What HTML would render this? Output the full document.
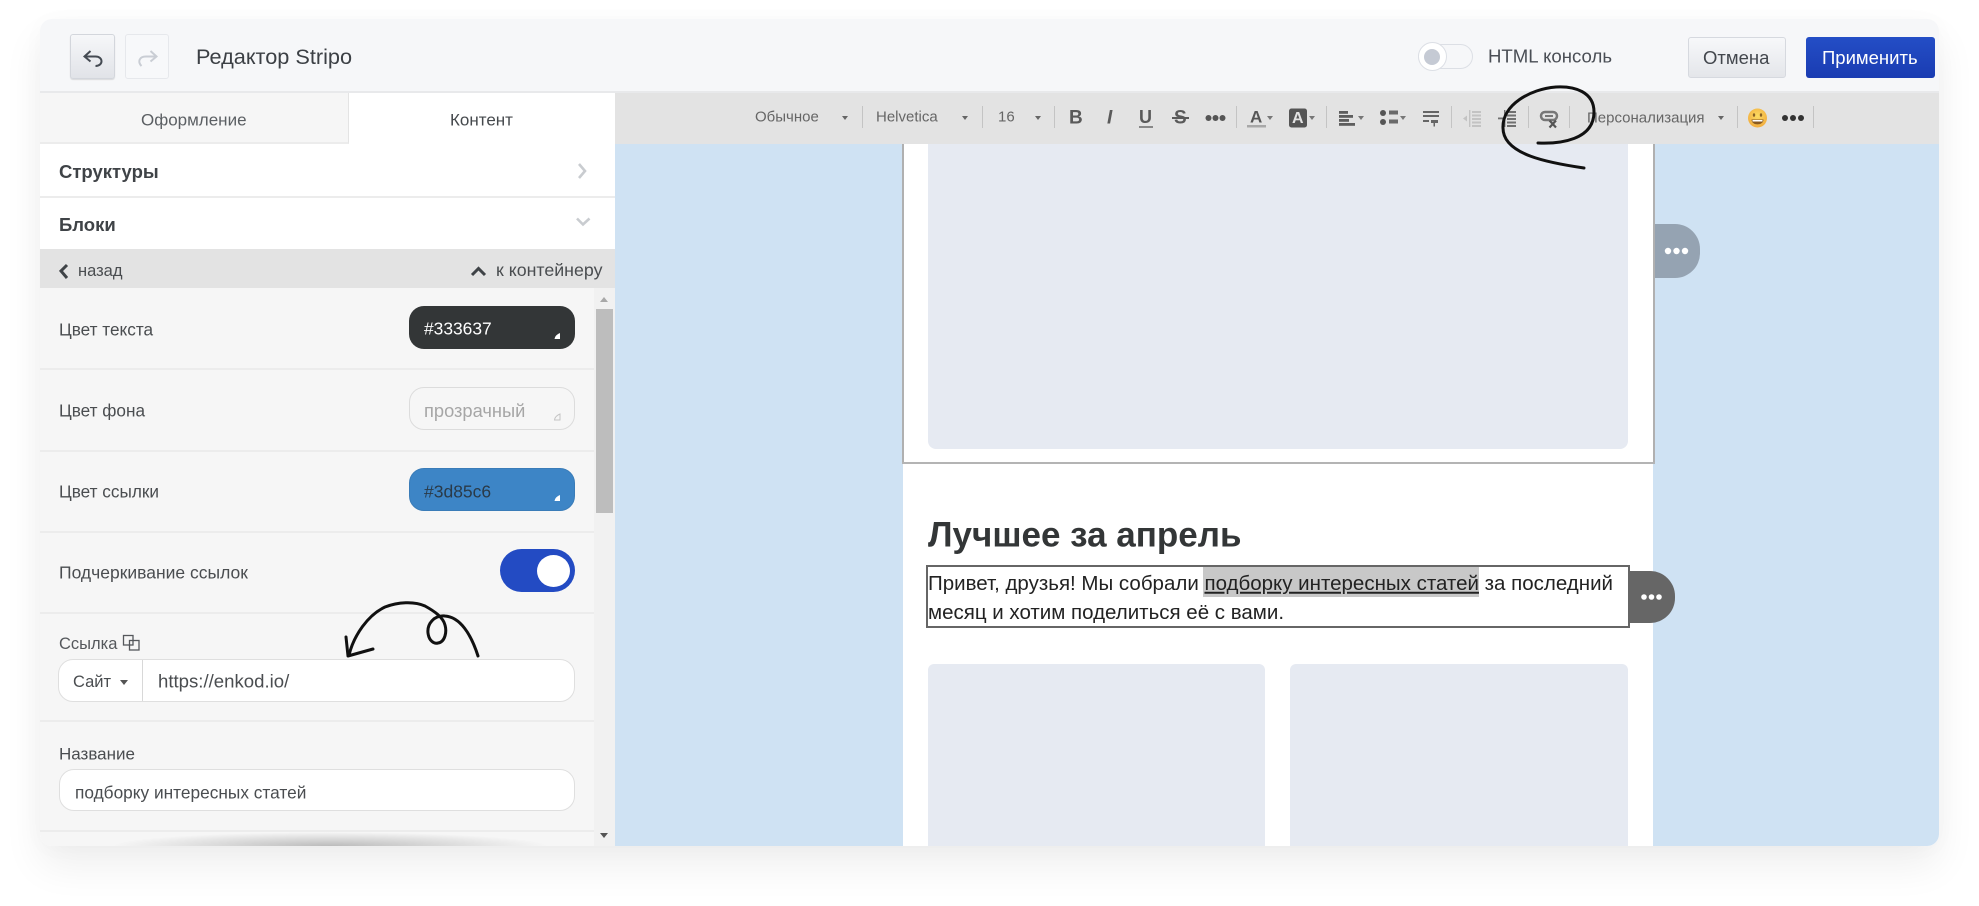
<!DOCTYPE html>
<html lang="ru"><head><meta charset="utf-8"><title>Редактор Stripo</title>
<style>
html,body{margin:0;padding:0;background:#fff;width:1979px;height:906px;overflow:hidden}
*{box-sizing:border-box}
body{font-family:"Liberation Sans",sans-serif;color:#333637;position:relative}
#s{position:absolute;left:40px;top:19px;width:1899px;height:827px;border-radius:12px;box-shadow:0 20px 40px rgba(0,0,0,.065),0 2px 24px rgba(0,0,0,.025)}
#w{position:absolute;left:40px;top:19px;width:1899px;height:827px;border-radius:12px;overflow:hidden;background:#fff}
#i{position:absolute;left:-40px;top:-19px;width:1979px;height:906px}
.b{position:absolute}
.t{position:absolute;white-space:nowrap;line-height:1;transform:translateY(-50%)}
.l{font-size:17.2px;color:#4a4d50;left:59px}
.sep{position:absolute;top:106px;height:22px;width:1px;background:#c4c4c4}
.tb{font-size:15px;color:#666}
.c{position:absolute;width:0;height:0;border-left:3.5px solid transparent;border-right:3.5px solid transparent;border-top:4px solid #666}
.ln{position:absolute;left:40px;width:554px;height:2px;background:#ececec}
.pill{position:absolute;left:409px;width:166px;height:43px;border-radius:15px}
svg{position:absolute;overflow:visible}
</style></head><body>
<div id="s"></div>
<div id="w"><div id="i">
<!-- header -->
<div class="b" style="left:0;top:0;width:1979px;height:93px;background:#f6f7f9;border-bottom:2px solid #e8e9eb"></div>
<div class="b" style="left:70px;top:34px;width:45px;height:45px;border:1px solid #d3d6dc;border-radius:3px;background:linear-gradient(#f6f7f9,#e1e3e8);box-shadow:0 1px 1px rgba(0,0,0,.12)"></div>
<div class="b" style="left:125px;top:34px;width:44px;height:45px;border:1px solid #e6e8ec;border-radius:3px;background:#f7f8fa"></div>
<svg style="left:0;top:0" width="200" height="90" fill="none" stroke-width="2">
<path d="M90.500 51L84.500 56.500L90.500 61.500M85 56.500H95.500C103.500 56.500 103.500 66 95.500 66" stroke="#444a52"/>
<path d="M150.500 51L156.500 56.500L150.500 61.500M156 56.500H146C139 56.500 137.500 62 141.500 66" stroke="#c9cdd4"/>
</svg>
<div class="t" style="left:196px;top:57px;font-size:21.7px;color:#3c4045">Редактор Stripo</div>
<div class="b" style="left:1418px;top:44px;width:55px;height:25px;border:1.5px solid #dcdfe5;border-radius:13px;background:#f6f7f9"></div>
<div class="b" style="left:1418px;top:42px;width:29px;height:29px;border-radius:50%;background:#fff;border:1.5px solid #dcdfe5"></div>
<div class="b" style="left:1424px;top:49px;width:16px;height:16px;border-radius:50%;background:#c5cad4"></div>
<div class="t" style="left:1488px;top:57px;font-size:18.6px;color:#4a4e55">HTML консоль</div>
<div class="b" style="left:1688px;top:37px;width:98px;height:41px;border:1px solid #d6d9df;border-radius:3px;background:linear-gradient(#f7f8fa,#e4e6ea)"></div>
<div class="t" style="left:1703px;top:58px;font-size:18.500px;color:#43474d">Отмена</div>
<div class="b" style="left:1806px;top:37px;width:129px;height:41px;border-radius:3px;background:linear-gradient(#244ec6,#1a3cb2)"></div>
<div class="t" style="left:1822px;top:58px;font-size:18.500px;color:#fff">Применить</div>
<!-- tabs -->
<div class="b" style="left:40px;top:93px;width:309px;height:51px;background:#f6f6f6;border-right:1px solid #e4e4e4;border-bottom:2px solid #ececec"></div>
<div class="b" style="left:349px;top:93px;width:266px;height:51px;background:#fff"></div>
<div class="t" style="left:141px;top:120px;font-size:17px;color:#5b5f63">Оформление</div>
<div class="t" style="left:450px;top:120px;font-size:17px;color:#45494d">Контент</div>
<!-- accordions -->
<div class="b" style="left:40px;top:144px;width:575px;height:52px;background:#fff"></div>
<div class="b" style="left:40px;top:196px;width:575px;height:2px;background:#ececec"></div>
<div class="b" style="left:40px;top:198px;width:575px;height:51px;background:#fff"></div>
<div class="t" style="left:59px;top:172px;font-size:18.500px;font-weight:700;color:#3f4347">Структуры</div>
<div class="t" style="left:59px;top:225px;font-size:18.500px;font-weight:700;color:#3f4347">Блоки</div>
<svg style="left:0;top:0" width="620" height="300" fill="none" stroke="#c9ccd0" stroke-width="2.600">
<path d="M579 164L585 171L579 178"/><path d="M577 218.500L583 224.500L589.500 218.500"/>
</svg>
<div class="b" style="left:40px;top:249px;width:575px;height:39px;background:#e3e3e3"></div>
<svg style="left:0;top:0" width="620" height="300" fill="none" stroke="#3f4347" stroke-width="3">
<path d="M67 265L61 271L67 278"/><path d="M472 275L478.500 268.500L485 275"/>
</svg>
<div class="t" style="left:78px;top:271px;font-size:16.500px;color:#4a4d50">назад</div>
<div class="t" style="left:496px;top:271px;font-size:17.800px;color:#4a4d50">к контейнеру</div>
<!-- panel -->
<div class="b" style="left:40px;top:288px;width:554px;height:558px;background:#f6f6f6"></div>
<div class="b" style="left:594px;top:288px;width:21px;height:558px;background:#f1f1f1"></div>
<div class="b" style="left:596px;top:309px;width:17px;height:204px;background:#bdbdbd"></div>
<div class="b" style="left:600px;top:297px;width:0;height:0;border-left:4.500px solid transparent;border-right:4.500px solid transparent;border-bottom:5px solid #a8a8a8"></div>
<div class="b" style="left:600px;top:833px;width:0;height:0;border-left:4.500px solid transparent;border-right:4.500px solid transparent;border-top:5px solid #555"></div>
<div class="ln" style="top:368px"></div><div class="ln" style="top:450px"></div><div class="ln" style="top:531px"></div><div class="ln" style="top:612px"></div><div class="ln" style="top:720px"></div><div class="ln" style="top:830px"></div>
<div class="t l" style="top:329.500px">Цвет текста</div>
<div class="t l" style="top:411px">Цвет фона</div>
<div class="t l" style="top:492px">Цвет ссылки</div>
<div class="t l" style="top:573px;font-size:17.500px">Подчеркивание ссылок</div>
<div class="pill" style="top:306px;background:#333637"></div>
<div class="t" style="left:424px;top:329px;font-size:17.400px;color:#fff">#333637</div>
<div class="pill" style="top:387px;background:#f6f6f6;border:1.500px solid #dcdcdc"></div>
<div class="t" style="left:424px;top:411px;font-size:18.300px;color:#a6a6a6">прозрачный</div>
<div class="pill" style="top:468px;background:#3d85c6;border:1px solid #3a7cb8"></div>
<div class="t" style="left:424px;top:492px;font-size:17.500px;color:#2a3a48">#3d85c6</div>
<svg style="left:0;top:0" width="620" height="530">
<path d="M560 333V339H554.500Q555 335 560 333Z" fill="#fff"/>
<path d="M560 414V420H554.500Q555 416 560 414Z" fill="none" stroke="#c4c4c4" stroke-width="1"/>
<path d="M560 495V501H554.500Q555 497 560 495Z" fill="#fff"/>
</svg>
<div class="b" style="left:500px;top:549px;width:75px;height:43px;border-radius:22px;background:#234bc3"></div>
<div class="b" style="left:537px;top:555px;width:33px;height:32px;border-radius:50%;background:#fff"></div>
<div class="t" style="left:59px;top:644px;font-size:16.500px;color:#55585c">Ссылка</div>
<svg style="left:0;top:0" width="160" height="660" fill="none" stroke="#55585c" stroke-width="1.300">
<rect x="123.500" y="635.500" width="9.500" height="9.500"/><rect x="129.500" y="640.500" width="9.500" height="9.500"/>
</svg>
<div class="b" style="left:58px;top:659px;width:517px;height:43px;border:1.500px solid #dfdfdf;border-radius:15px;background:#fff"></div>
<div class="b" style="left:142px;top:660px;width:1px;height:41px;background:#d8d8d8"></div>
<div class="t" style="left:73px;top:682px;font-size:16.500px;color:#4a4d50">Сайт</div>
<div class="c" style="left:120px;top:680px;border-left-width:4.500px;border-right-width:4.500px;border-top-width:5px;border-top-color:#555"></div>
<div class="t" style="left:158px;top:682px;font-size:18.600px;color:#4a4d50">https://enkod.io/</div>
<div class="t" style="left:59px;top:754px;font-size:17px;color:#4a4d50">Название</div>
<div class="b" style="left:59px;top:769px;width:516px;height:42px;border:1.500px solid #dfdfdf;border-radius:15px;background:#fff"></div>
<div class="t" style="left:75px;top:793px;font-size:17.300px;color:#4a4d50">подборку интересных статей</div>
<div class="b" style="left:110px;top:832px;width:440px;height:28px;background:radial-gradient(ellipse at center,rgba(0,0,0,.24),rgba(0,0,0,.10) 40%,rgba(0,0,0,0) 70%)"></div>
<!-- toolbar -->
<div class="b" style="left:615px;top:93px;width:1324px;height:51px;background:#e3e3e3"></div>
<div class="t tb" style="left:755px;top:117px">Обычное</div><div class="c" style="left:842px;top:116px"></div><div class="sep" style="left:862px"></div>
<div class="t tb" style="left:876px;top:117px">Helvetica</div><div class="c" style="left:962px;top:116px"></div><div class="sep" style="left:982px"></div>
<div class="t tb" style="left:998px;top:117px">16</div><div class="c" style="left:1035px;top:116px"></div><div class="sep" style="left:1054px"></div>
<div class="t" style="left:1069px;top:118px;font-size:19px;font-weight:700;color:#5a5a5a">B</div>
<div class="t" style="left:1107px;top:118px;font-size:19px;font-weight:700;font-style:italic;color:#5a5a5a">I</div>
<div class="t" style="left:1139px;top:117px;font-size:18px;font-weight:700;color:#5a5a5a">U</div>
<div class="b" style="left:1139px;top:126px;width:14px;height:2px;background:#888"></div>
<div class="t" style="left:1174px;top:118px;font-size:19px;font-weight:700;color:#5a5a5a">S</div>
<div class="b" style="left:1172px;top:117px;width:17px;height:2px;background:#5a5a5a"></div>
<svg style="left:0;top:0" width="1979" height="144" fill="#555">
<circle cx="1208.500" cy="118" r="3"/><circle cx="1215.500" cy="118" r="3"/><circle cx="1222.500" cy="118" r="3"/>
<rect x="1247" y="125" width="19" height="2.500" fill="#a8a8a8"/>
<rect x="1289" y="108.500" width="18" height="19" rx="2.500" fill="#555"/>
<g fill="#5e5e5e"><rect x="1339" y="111" width="9" height="2.800"/><rect x="1339" y="115" width="14" height="2.800"/><rect x="1339" y="119" width="10" height="2.800"/><rect x="1339" y="123" width="16" height="2.800"/></g>
<circle cx="1383" cy="113" r="3"/><circle cx="1383" cy="122" r="3"/><g fill="#6a6a6a"><rect x="1389" y="110.500" width="9" height="4"/><rect x="1389" y="119.500" width="9" height="4"/></g>
<g fill="#666"><rect x="1423" y="111" width="16" height="2"/><rect x="1423" y="115" width="16" height="2"/><rect x="1423" y="120" width="6" height="2"/><path d="M1431 120h7v3h-3v3.500l-1.500 0v-3.500h-2.500z" /></g>
<g fill="#c3c3c3"><rect x="1472" y="111" width="9" height="2"/><rect x="1472" y="114.500" width="9" height="2"/><rect x="1472" y="118" width="9" height="2"/><rect x="1472" y="121.500" width="9" height="2"/><rect x="1472" y="125" width="9" height="2"/><rect x="1469" y="110" width="1.400" height="17"/><path d="M1463 118.500l4-3v6z"/></g>
<g fill="#707070"><rect x="1507" y="111" width="9" height="2"/><rect x="1507" y="114.500" width="9" height="2"/><rect x="1507" y="118" width="9" height="2"/><rect x="1507" y="121.500" width="9" height="2"/><rect x="1507" y="125" width="9" height="2"/><rect x="1504" y="110" width="1.400" height="17"/><rect x="1498" y="117.500" width="5" height="1.800"/></g>
<rect x="1541" y="112" width="16" height="8" rx="4" fill="none" stroke="#777" stroke-width="2.500"/>
<rect x="1545" y="115" width="8" height="2" fill="#777"/>
<path d="M1549.500 120.500l6.500 7M1556 120.500l-6.500 7" stroke="#555" stroke-width="2.200" fill="none"/>
</svg>
<div class="t" style="left:1250px;top:117px;font-size:17px;font-weight:700;color:#555">A</div>
<div class="t" style="left:1292px;top:118.500px;font-size:16px;font-weight:700;color:#e3e3e3">A</div>
<div class="c" style="left:1267px;top:116px;border-top-color:#777"></div>
<div class="c" style="left:1309px;top:116px;border-top-color:#777"></div>
<div class="c" style="left:1358px;top:116px;border-top-color:#777"></div>
<div class="c" style="left:1400px;top:116px;border-top-color:#777"></div>
<div class="sep" style="left:1236px"></div><div class="sep" style="left:1326px"></div><div class="sep" style="left:1451px"></div><div class="sep" style="left:1528px"></div><div class="sep" style="left:1569px"></div>
<div class="t tb" style="left:1587px;top:118px">Персонализация</div><div class="c" style="left:1718px;top:116px"></div><div class="sep" style="left:1737px"></div>
<svg style="left:0;top:0" width="1979" height="144">
<defs><radialGradient id="e" cx=".5" cy=".4" r=".6"><stop offset="0" stop-color="#fbdc62"/><stop offset="1" stop-color="#f2ad3f"/></radialGradient></defs>
<circle cx="1757.500" cy="118" r="9.500" fill="url(#e)"/>
<ellipse cx="1754" cy="115" rx="1.200" ry="1.800" fill="#8a6226"/><ellipse cx="1761" cy="115" rx="1.200" ry="1.800" fill="#8a6226"/>
<path d="M1751.500 119.500H1763.500C1763.500 126 1751.500 126 1751.500 119.500Z" fill="#8a5a20"/><path d="M1752.500 120H1762.500V121.500H1752.500Z" fill="#fff"/>
<g fill="#333"><circle cx="1785" cy="118" r="3"/><circle cx="1793" cy="118" r="3"/><circle cx="1801" cy="118" r="3"/></g>
</svg>
<div class="sep" style="left:1813px"></div>
<!-- canvas -->
<div class="b" style="left:615px;top:144px;width:1324px;height:702px;background:#cfe2f3"></div>
<div class="b" style="left:903px;top:144px;width:750px;height:702px;background:#fff"></div>
<div class="b" style="left:902px;top:144px;width:2px;height:320px;background:#b0b0b0"></div>
<div class="b" style="left:1653px;top:144px;width:2px;height:320px;background:#b0b0b0"></div>
<div class="b" style="left:902px;top:462px;width:753px;height:2px;background:#b4b4b4"></div>
<div class="b" style="left:928px;top:144px;width:700px;height:305px;background:#e6eaf2;border-radius:0 0 8px 8px"></div>
<div class="b" style="left:1655px;top:224px;width:45px;height:54px;background:#95a3b2;border-radius:0 25px 25px 0"></div>
<svg style="left:0;top:0" width="1979" height="300" fill="#fff"><circle cx="1668" cy="251" r="3.200"/><circle cx="1676.500" cy="251" r="3.200"/><circle cx="1685" cy="251" r="3.200"/></svg>
<div class="t" style="left:928px;top:535px;font-size:35px;font-weight:700;color:#333637">Лучшее за апрель</div>
<div class="b" style="left:1630px;top:571px;width:45px;height:52px;background:#666;border-radius:0 25px 25px 0"></div>
<svg style="left:0;top:0" width="1979" height="650" fill="#fff"><circle cx="1644" cy="597" r="2.800"/><circle cx="1651.500" cy="597" r="2.800"/><circle cx="1659" cy="597" r="2.800"/></svg>
<div class="b" style="left:926px;top:565px;width:704px;height:63px;border:2px solid #666;background:#fff"></div>
<div class="b" style="left:1203px;top:567px;width:276px;height:30px;background:#c8c8c8"></div>
<div class="t" style="left:928px;top:584px;font-size:20.500px;color:#222">Привет, друзья! Мы собрали <span style="text-decoration:underline">подборку интересных статей</span> за последний</div>
<div class="t" style="left:928px;top:613px;font-size:20.500px;color:#222">месяц и хотим поделиться её с вами.</div>
<div class="b" style="left:928px;top:664px;width:337px;height:190px;background:#e6eaf2;border-radius:6px 6px 0 0"></div>
<div class="b" style="left:1290px;top:664px;width:338px;height:190px;background:#e6eaf2;border-radius:6px 6px 0 0"></div>
</div></div>
<!-- hand drawn annotations -->
<svg style="left:0;top:0" width="1979" height="906" fill="none" stroke="#111" stroke-width="3" stroke-linecap="round" stroke-linejoin="round">
<path d="M1538 143C1560 144 1594 140 1594 112C1594 92 1575 86 1556 87C1530 89 1502 105 1503 128C1503 155 1550 163 1584 168"/>
<path d="M478 656C471 634 460 617 445 616C434 615 427 624 428 633C429 641 434 644 438 643C445 642 447 632 445 625C443 617 434 611 425 606C414 601 398 602 385 607C368 615 354 635 349 655"/>
<path d="M346 637L348 656L373 649"/>
</svg>
</body></html>
